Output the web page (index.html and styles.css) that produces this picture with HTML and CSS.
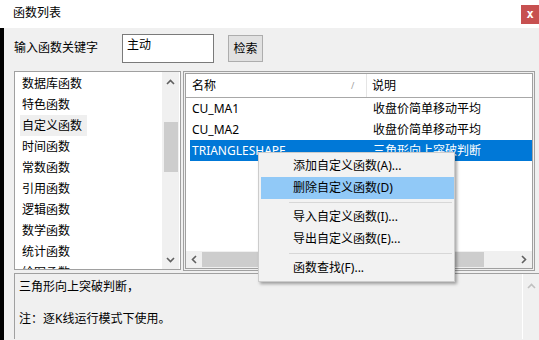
FILE: index.html
```html
<!doctype html>
<html lang="zh-CN">
  <head>
    <meta charset="utf-8" />
    <title>函数列表</title>
    <link rel="stylesheet" href="styles.css">
  </head>
  <body>
    <div class="titlebar">
        <span class="title">函数列表</span>
        <span class="close">x</span>
    </div>
    <div class="main">
        <div class="search">
            <label class="search-label">输入函数关键字</label>
            <div class="search-input">主动</div>
            <button class="search-btn">检索</button>
        </div>
        <div class="panels">
            <div class="cat-list">
                <ul class="cats">
                    <li>数据库函数</li>
                    <li>特色函数</li>
                    <li class="cur">自定义函数</li>
                    <li>时间函数</li>
                    <li>常数函数</li>
                    <li>引用函数</li>
                    <li>逻辑函数</li>
                    <li>数学函数</li>
                    <li>统计函数</li>
                    <li>绘图函数</li>
                </ul>
                <div class="vscroll">
                    <svg class="arrow" width="9" height="6" viewBox="0 0 9 6"><polyline points="1,5 4.5,1.5 8,5" /></svg>
                    <div class="vthumb"></div>
                    <svg class="arrow down" width="9" height="6" viewBox="0 0 9 6"><polyline points="1,1 4.5,4.5 8,1" /></svg>
                </div>
            </div>
            <div class="func-panel">
                <div class="func-inner">
                    <div class="func-head">
                        <div class="col-name">名称<span class="sort">/</span></div>
                        <div class="col-desc">说明</div>
                    </div>
                    <div class="func-rows">
                        <div class="row"><span class="c1">CU_MA1</span><span class="c2">收盘价简单移动平均</span></div>
                        <div class="row"><span class="c1">CU_MA2</span><span class="c2">收盘价简单移动平均</span></div>
                        <div class="row sel"><span class="c1">TRIANGLESHAPE</span><span class="c2">三角形向上突破判断</span></div>
                    </div>
                    <div class="hscroll">
                        <svg class="arrow" width="6" height="9" viewBox="0 0 6 9"><polyline points="5,1 1.5,4.5 5,8" /></svg>
                        <div class="hthumb"></div>
                        <svg class="arrow" width="6" height="9" viewBox="0 0 6 9"><polyline points="1,1 4.5,4.5 1,8" /></svg>
                    </div>
                </div>
            </div>
        </div>
        <div class="desc">
            <div class="desc-text">三角形向上突破判断，<br><br>注：逐K线运行模式下使用。</div>
            <div class="desc-scroll">
                <svg class="arrow light" width="9" height="6" viewBox="0 0 9 6"><polyline points="1,5 4.5,1.5 8,5" /></svg>
            </div>
        </div>

        <!-- right-click menu over the function list -->
        <div class="menu">
            <div class="item">添加自定义函数(A)...</div>
            <div class="item hot">删除自定义函数(D)</div>
            <div class="sep"></div>
            <div class="item">导入自定义函数(I)...</div>
            <div class="item">导出自定义函数(E)...</div>
            <div class="sep"></div>
            <div class="item">函数查找(F)...</div>
        </div>
    </div>
  </body>
</html>
```

FILE: styles.css
```css
body
{
    margin: 0;
    width: 539px;
    height: 340px;
    overflow: hidden;
    background: #000;
    font-family: "Noto Sans", "Noto Sans CJK SC", sans-serif;
    font-size: 12px;
    line-height: 16px;
    color: #000;
}

.titlebar
{
    height: 28px;
    background: #fff;
    display: flex;
    align-items: flex-start;
}

.title
{
    margin: 5px 0 0 13px;
}

.close
{
    margin: 5px 0 0 auto;
    width: 18px;
    height: 19px;
    background: #c75050;
    color: #fff;
    font-weight: bold;
    font-size: 12px;
    line-height: 18px;
    text-align: center;
    font-family: "DejaVu Sans Mono", monospace;
}

.main
{
    position: relative;
    margin-left: 4px;
    height: 312px;
    background: #f0f0f0;
}

.search
{
    height: 43px;
    box-sizing: border-box;
    padding: 6px 0 0 10px;
    display: flex;
    align-items: flex-start;
}

.search-label
{
    width: 108px;
    margin-top: 6px;
}

.search-input
{
    width: 92px;
    height: 29px;
    box-sizing: border-box;
    border: 1px solid #7a7a7a;
    background: #fff;
    padding: 2px 4px;
}

.search-btn
{
    margin: 1px 0 0 14px;
    width: 35px;
    height: 27px;
    padding: 0;
    border: 1px solid #adadad;
    background: #e1e1e1;
    font: inherit;
    color: #000;
}

.panels
{
    display: flex;
    margin-left: 10px;
    height: 200px;
}

.cat-list
{
    width: 167px;
    box-sizing: border-box;
    border: 1px solid #a0a0a0;
    background: #fff;
    display: flex;
    padding-right: 1px;
    height: 199px;
}

.cats
{
    flex: 1;
    list-style: none;
    margin: 0;
    padding: 1px 0 0 5px;
    overflow: hidden;
}

.cats li
{
    width: max-content;
    height: 21px;
    line-height: 21px;
    padding: 0 5px 0 2px;
}

.cats li.cur
{
    background: #efefef;
}

.vscroll
{
    width: 17px;
    background: #f0f0f0;
    display: flex;
    flex-direction: column;
    align-items: center;
}

.arrow polyline
{
    fill: none;
    stroke: #606060;
    stroke-width: 1.6;
}

.arrow.light polyline
{
    stroke: #c0c0c0;
}

.vscroll .arrow
{
    margin-top: 7px;
}

.vscroll .arrow.down
{
    margin-top: auto;
    margin-bottom: 6px;
}

.vthumb
{
    width: 14px;
    height: 50px;
    margin-top: 37px;
    background: #cdcdcd;
}

.func-panel
{
    margin-left: 2px;
    width: 352px;
    box-sizing: border-box;
    border: 1px solid #a0a0a0;
    padding: 1px;
}

.func-inner
{
    height: 100%;
    box-sizing: border-box;
    border: 1px solid #a0a0a0;
    background: #fff;
    display: flex;
    flex-direction: column;
}

.func-head
{
    height: 24px;
    box-sizing: border-box;
    border-bottom: 1px solid #a8a8a8;
    display: flex;
    line-height: 23px;
}

.col-name
{
    width: 181px;
    box-sizing: border-box;
    padding-left: 6px;
    border-right: 1px solid #e5e5e5;
    position: relative;
}

.sort
{
    position: absolute;
    left: 165px;
    top: 0;
    font-size: 9px;
    color: #a0a0a0;
}

.col-desc
{
    padding-left: 5px;
}

.func-rows
{
    flex: 1;
}

.row
{
    margin-left: 4px;
    height: 21px;
    line-height: 21px;
    display: flex;
}

.row.sel
{
    background: #0078d7;
    color: #fff;
}

.c1
{
    width: 177px;
    padding-left: 2px;
    box-sizing: border-box;
}

.c2
{
    padding-left: 6px;
}

.hscroll
{
    height: 17px;
    background: #f0f0f0;
    display: flex;
    align-items: center;
}

.hscroll .arrow
{
    margin: 0 5px;
}

.hthumb
{
    width: 282px;
    height: 15px;
    background: #cdcdcd;
    margin-right: auto;
}

.desc
{
    margin: 2px 0 0 10px;
    height: 65px;
    border-top: 1px solid #a0a0a0;
    border-left: 1px solid #a0a0a0;
    display: flex;
}

.desc-text
{
    flex: 1;
    padding: 5px 0 0 4px;
}

.desc-scroll
{
    width: 16px;
    border-left: 1px solid #fff;
    display: flex;
    justify-content: center;
    align-items: flex-start;
    padding-top: 9px;
}

.menu
{
    position: absolute;
    left: 254px;
    top: 124px;
    width: 197px;
    height: 130px;
    box-sizing: border-box;
    border: 1px solid #cccccc;
    background: #f2f2f2;
    padding: 2px 0 0 0;
    box-shadow: 2px 2px 3px rgba(0, 0, 0, 0.35);
}

.item
{
    height: 22px;
    line-height: 22px;
    margin-left: 2px;
    padding-left: 32px;
}

.item.hot
{
    background: #91c9f7;
}

.sep
{
    height: 1px;
    margin: 3px 2px 3px 30px;
    background: #d7d7d7;
}
```
